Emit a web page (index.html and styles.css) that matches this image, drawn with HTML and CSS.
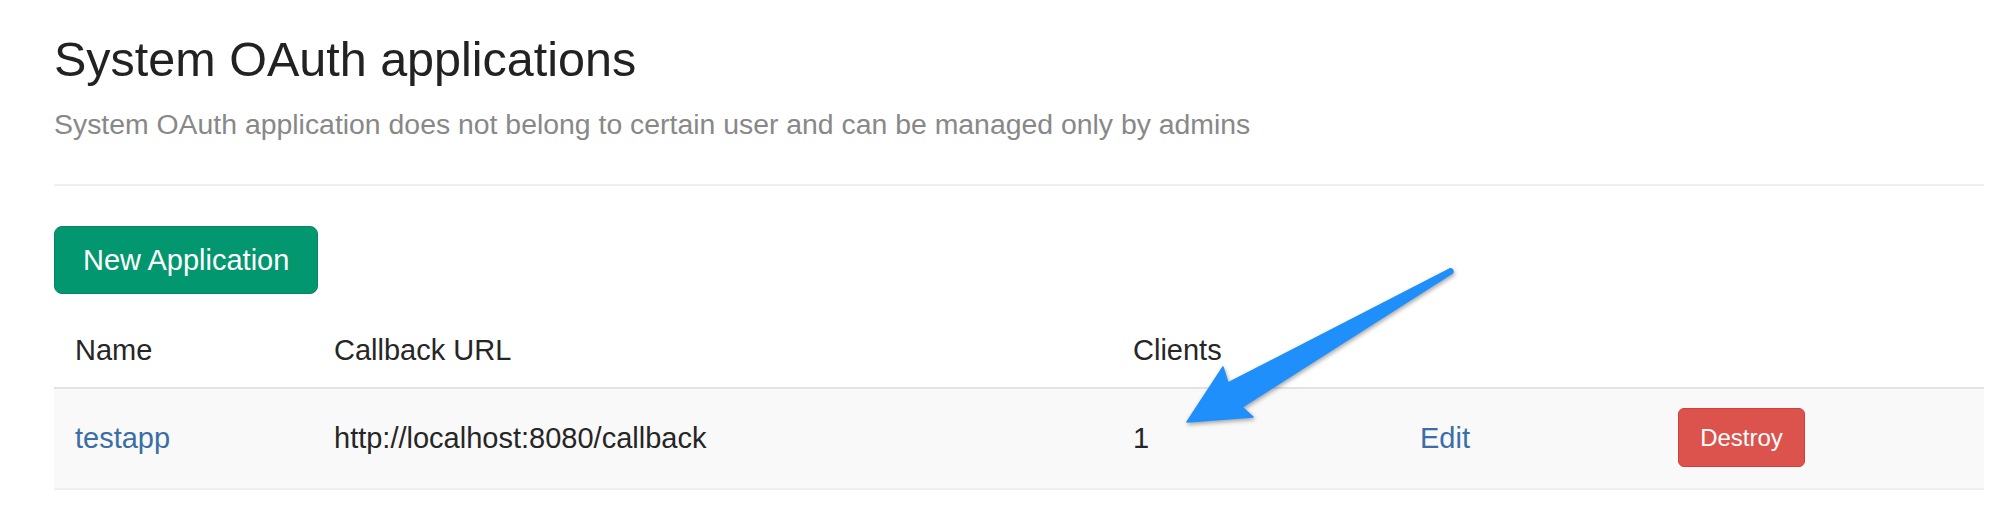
FILE: index.html
```html
<!DOCTYPE html>
<html lang="en">
<head>
<meta charset="utf-8">
<title>System OAuth applications</title>
<link rel="stylesheet" href="styles.css">
</head>
<body>
<div class="page">
  <h1 class="title">System OAuth applications</h1>
  <p class="lead">System OAuth application does not belong to certain user and can be managed only by admins</p>
  <hr class="divider">
  <a class="btn btn-success" href="#">New Application</a>
  <table class="apps">
    <colgroup>
      <col class="c-name"><col class="c-url"><col class="c-clients"><col class="c-edit"><col class="c-destroy">
    </colgroup>
    <thead>
      <tr><th>Name</th><th>Callback URL</th><th>Clients</th><th></th><th></th></tr>
    </thead>
    <tbody>
      <tr>
        <td><a class="link" href="#">testapp</a></td>
        <td>http://localhost:8080/callback</td>
        <td>1</td>
        <td><a class="link" href="#">Edit</a></td>
        <td><a class="btn btn-danger" href="#">Destroy</a></td>
      </tr>
    </tbody>
  </table>
</div>
<svg class="arrow" width="2006" height="514" viewBox="0 0 2006 514" aria-hidden="true">
  <path d="M1187,422 L1223,367 L1228,383 L1449.8,268.8 A2.6,2.6 0 0 1 1452.2,273.2 L1242,407 L1253,417 Z" fill="#1f8ffb" stroke="#1f8ffb" stroke-width="1.5" stroke-linejoin="round"/>
</svg>
</body>
</html>
```
FILE: styles.css
```css
html, body {
  margin: 0;
  padding: 0;
  background: #fff;
}
body {
  font-family: "Liberation Sans", Arial, "Helvetica Neue", sans-serif;
  color: #262626;
  width: 2006px;
  height: 514px;
  overflow: hidden;
  position: relative;
}
.page {
  padding-left: 54px;
  width: 1930px;
}
.title {
  margin: 33px 0 0;
  font-size: 48.5px;
  line-height: 53px;
  font-weight: 400;
  color: #222;
}
.lead {
  margin: 18px 0 0;
  font-size: 28.4px;
  line-height: 40px;
  color: #888;
}
.divider {
  margin: 40px 0 0;
  border: 0;
  border-top: 2px solid #eee;
  height: 0;
}
.btn {
  display: inline-block;
  box-sizing: border-box;
  border: 1px solid transparent;
  text-align: center;
  text-decoration: none;
  color: #fff;
  white-space: nowrap;
}
.btn-success {
  margin-top: 40px;
  height: 68px;
  line-height: 66px;
  padding: 0 28px;
  font-size: 29px;
  background: #03976f;
  border-color: #058660;
  border-radius: 8px;
}
.btn-danger {
  width: 127px;
  height: 59px;
  line-height: 57px;
  font-size: 24px;
  background: #dc534e;
  border-color: #d43f3a;
  border-radius: 6px;
  vertical-align: middle;
}
.apps {
  margin-top: 19px;
  width: 1930px;
  table-layout: fixed;
  border-collapse: collapse;
  border-spacing: 0;
  font-size: 29px;
  line-height: 40px;
}
.c-name { width: 259px; }
.c-url { width: 799px; }
.c-clients { width: 287px; }
.c-edit { width: 258px; }
.c-destroy { width: 327px; }
.apps th {
  text-align: left;
  font-weight: 400;
  padding: 17px 0 17px 21px;
  border-bottom: 2px solid #e2e2e2;
  vertical-align: bottom;
}
.apps td {
  padding: 19px 0 21px 21px;
  background: #f9f9f9;
  border-bottom: 2px solid #eee;
  vertical-align: middle;
}
.link {
  color: #3a6ea6;
  text-decoration: none;
}
.arrow {
  position: absolute;
  left: 0;
  top: 0;
  pointer-events: none;
  filter: drop-shadow(1px 2px 2px rgba(0, 0, 0, 0.35));
}
```
